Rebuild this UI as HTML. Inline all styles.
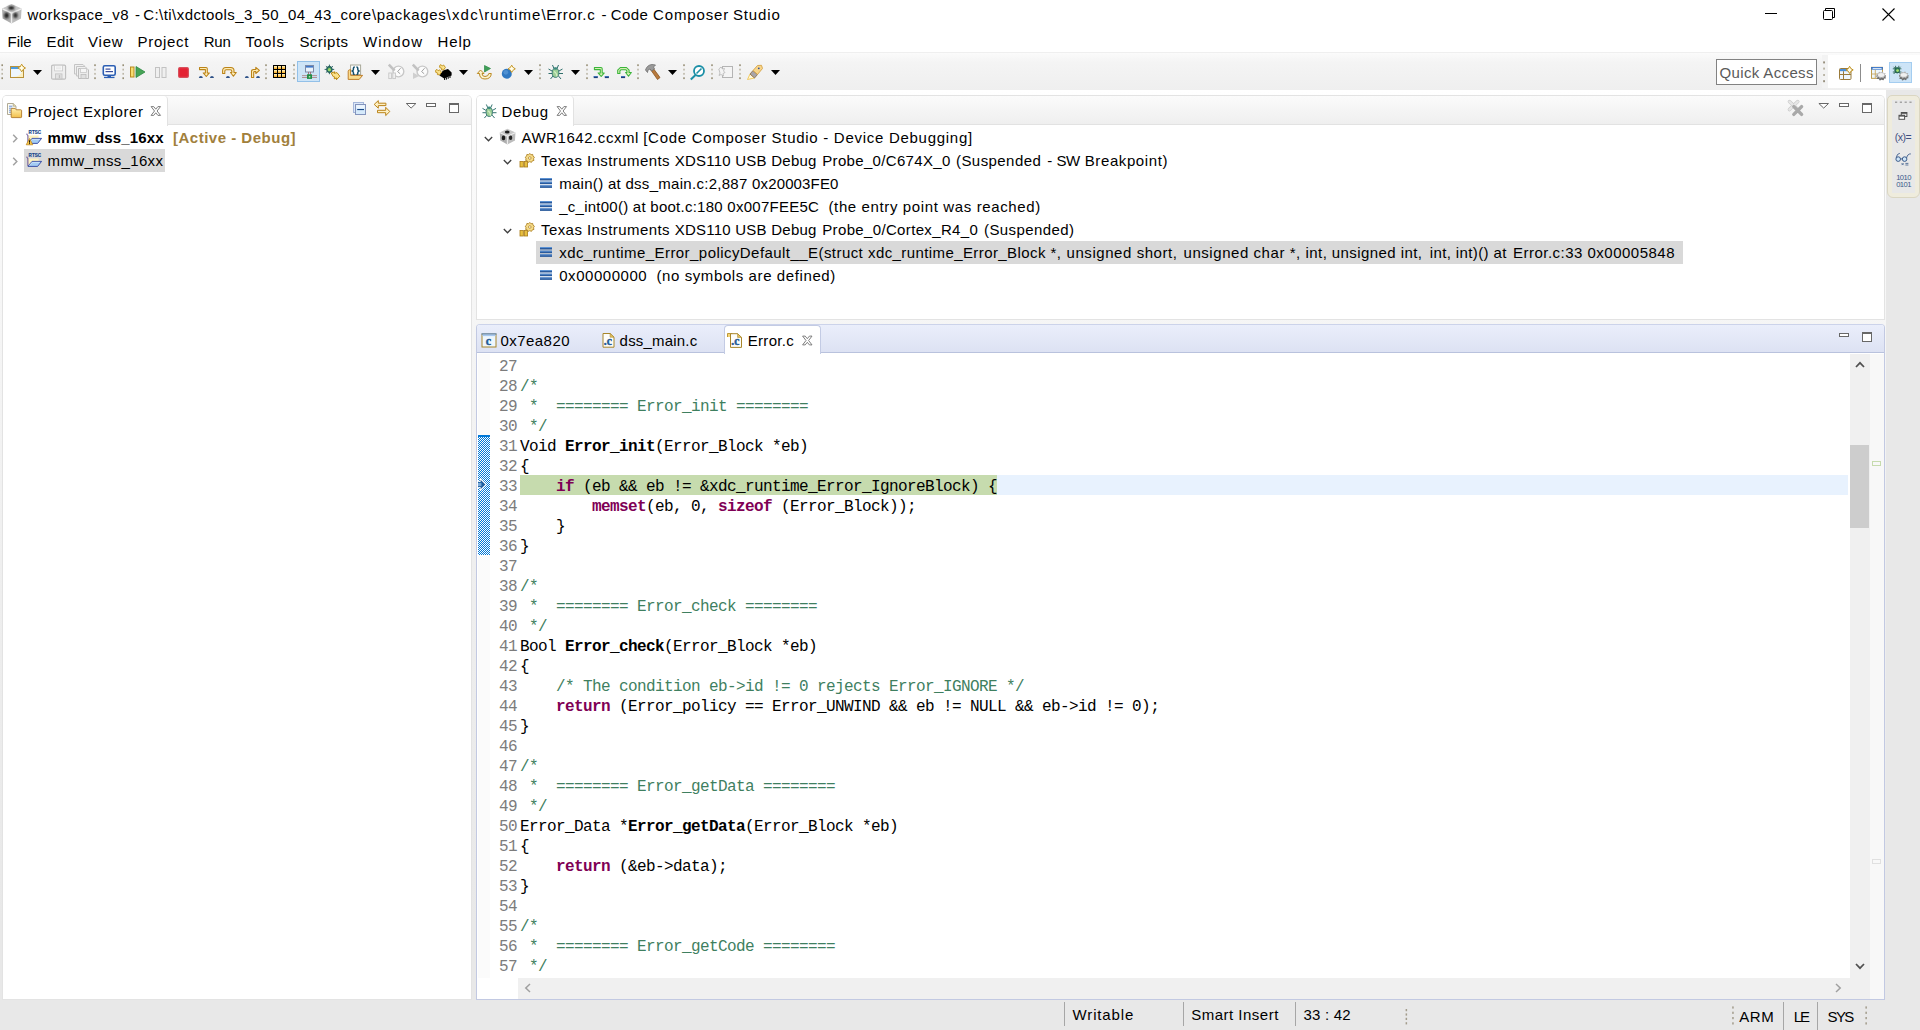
<!DOCTYPE html>
<html><head><meta charset="utf-8"><title>Code Composer Studio</title>
<style>
*{box-sizing:border-box;margin:0;padding:0}
html,body{width:1920px;height:1030px;overflow:hidden;background:#e8e8e8}
body{position:relative;font-family:"Liberation Sans",sans-serif;font-size:15px;color:#000}
.a{position:absolute;white-space:pre}
svg.a{overflow:visible}
.t{position:absolute;white-space:pre;line-height:20px;height:20px}
#titlebar{left:0;top:0;width:1920px;height:53px;background:#fff;border-bottom:1px solid #efefef}
#toolbar{left:0;top:53px;width:1920px;height:37px;background:linear-gradient(#fbfbfb,#f4f4f4 25%,#efefef)}
.panel{position:absolute;background:#fff}
.sh{box-shadow:0 0 0 1px #e3e3e3}
.hdr{position:absolute;left:0;top:0;right:0;height:29px;background:linear-gradient(#fbfbfb,#efefef);border-bottom:1px solid #e2e2e2;border-radius:4px 4px 0 0}
.code{font-family:"Liberation Mono",monospace;font-size:16px;letter-spacing:-0.6px;line-height:20px}
.ln{height:20px;white-space:pre}
.no{color:#7c7c7c;display:inline-block;width:21px}
.c{color:#3f7f5f}.k{color:#7f0055;font-weight:700}.b{font-weight:700}
</style></head><body>
<div class="a" id="titlebar"></div>
<div class="a" id="toolbar"></div>
<div class="a" style="left:0;top:90px;width:1886px;height:910px;background:linear-gradient(#ffffff,#f8f8f8 15%,#eeeeee 56%,#e8e8e8 92%)"></div>
<svg width="0" height="0" style="position:absolute"><defs><filter id="bl" x="-20%" y="-20%" width="140%" height="140%"><feGaussianBlur stdDeviation="0.85"/></filter><filter id="bl2" x="-20%" y="-20%" width="140%" height="140%"><feGaussianBlur stdDeviation="0.45"/></filter></defs></svg>
<svg class="a" style="left:0px;top:0px" width="24" height="26"><g filter="url(#bl2)"><path d="M11.5 4L21.6 8.6 11.5 13.2 2 8.6Z" fill="#c8c8c8"/><path d="M2 8.6L11.5 13.2V23.6L2.6 18.6Z" fill="#aeaeae"/><path d="M11.5 13.2L21.6 8.6 21 18.6 11.5 23.6Z" fill="#bcbcbc"/><path d="M11.5 13.2V23.4M2.4 8.8L11.5 13.2 21.4 8.8" stroke="#eeeeee" stroke-width="1.4" fill="none"/></g><g filter="url(#bl)"><ellipse cx="11.3" cy="7.9" rx="3" ry="1.9" fill="#1c1c1c"/><ellipse cx="6.6" cy="15.4" rx="2.2" ry="2.9" fill="#1c1c1c"/><ellipse cx="15.5" cy="15.3" rx="2.1" ry="2.8" fill="#262626"/></g></svg>
<div class="t" style="left:27.50px;top:5px;letter-spacing:0.466px;">workspace_v8</div>
<div class="t" style="left:135.00px;top:5px;letter-spacing:-0.750px;">-</div>
<div class="t" style="left:143.25px;top:5px;letter-spacing:0.437px;">C:\ti\xdctools_3_50_04_43_core</div>
<div class="t" style="left:372.00px;top:5px;letter-spacing:0.660px;">\packages</div>
<div class="t" style="left:446.50px;top:5px;letter-spacing:1.224px;">\xdc</div>
<div class="t" style="left:479.00px;top:5px;letter-spacing:1.015px;">\runtime</div>
<div class="t" style="left:541.50px;top:5px;letter-spacing:0.688px;">\Error.c</div>
<div class="t" style="left:601.50px;top:5px;letter-spacing:-0.100px;">-</div>
<div class="t" style="left:610.75px;top:5px;letter-spacing:0.397px;">Code</div>
<div class="t" style="left:653.00px;top:5px;letter-spacing:0.873px;">Composer</div>
<div class="t" style="left:733.00px;top:5px;letter-spacing:0.846px;">Studio</div>
<svg class="a" style="left:1765px;top:13px" width="12" height="1"><rect width="12" height="1" fill="#000"/></svg>
<svg class="a" style="left:1823px;top:8px" width="12" height="12"><path d="M2.5 2.5V0.5H11.5V9.5H9.5" fill="none" stroke="#000"/><rect x="0.5" y="2.5" width="9" height="9" rx="1" fill="none" stroke="#000"/></svg>
<svg class="a" style="left:1882px;top:8px" width="13" height="13"><path d="M0.5 0.5L12.5 12.5M12.5 0.5L0.5 12.5" stroke="#000" stroke-width="1.1"/></svg>
<div class="t" style="left:7.60px;top:32px;letter-spacing:-0.021px;">File</div>
<div class="t" style="left:46.50px;top:32px;letter-spacing:0.383px;">Edit</div>
<div class="t" style="left:88.00px;top:32px;letter-spacing:0.786px;">View</div>
<div class="t" style="left:137.60px;top:32px;letter-spacing:0.694px;">Project</div>
<div class="t" style="left:203.80px;top:32px;letter-spacing:-0.293px;">Run</div>
<div class="t" style="left:245.40px;top:32px;letter-spacing:0.926px;">Tools</div>
<div class="t" style="left:299.40px;top:32px;letter-spacing:0.470px;">Scripts</div>
<div class="t" style="left:363.00px;top:32px;letter-spacing:1.135px;">Window</div>
<div class="t" style="left:437.60px;top:32px;letter-spacing:0.812px;">Help</div>
<svg class="a" style="left:1px;top:63px" width="3" height="17"><g transform="translate(0.2,0.7)"><rect x="0.2" y="0.6" width="1.6" height="1.8" fill="#989078"/><rect x="0.2" y="5" width="1.6" height="1.8" fill="#bcb7a8"/><rect x="0.2" y="9.2" width="1.6" height="1.8" fill="#bcb7a8"/><rect x="0.2" y="13.6" width="1.6" height="1.8" fill="#989078"/></g></svg>
<svg class="a" style="left:10px;top:64px" width="16" height="16"><rect x="0.5" y="2.5" width="13" height="11" fill="#eef6fd" stroke="#b8923a"/><rect x="1" y="3" width="12" height="2" fill="#4a9be0"/><path d="M3 13Q10.5 12.5 13 6.5V13Z" fill="#fdf0c0"/><path d="M11.7 0.20000000000000018Q12.6 3.1 15.5 4Q12.6 4.9 11.7 7.8Q10.799999999999999 4.9 7.8999999999999995 4Q10.799999999999999 3.1 11.7 0.20000000000000018Z" fill="#fff3c4" stroke="#c39424" stroke-width="1"/><path d="M11.7 1.7000000000000002V6.3M9.399999999999999 4H14.0" stroke="#fffdf0" stroke-width="1.1"/></svg>
<svg class="a" style="left:33px;top:70px" width="9" height="5"><path d="M0 0H9L4.5 5Z" fill="#000"/></svg>
<svg class="a" style="left:51px;top:64px" width="16" height="16"><g transform="translate(0,0.5)"><path d="M2 0.6H13.4Q14.6 0.6 14.6 1.8V13.4Q14.6 14.6 13.4 14.6H2Q0.6 14.6 0.6 13.4V1.8Q0.6 0.6 2 0.6Z" fill="#eeeeee" stroke="#bebebe" stroke-width="1.1"/><rect x="3.6" y="0.8" width="8" height="5.6" fill="#f8f8f8" stroke="#cacaca" stroke-width="0.8"/><path d="M5 2.6H10M5 4.2H10" stroke="#dcdcdc" stroke-width="0.6"/><rect x="4.4" y="9.4" width="6.6" height="5" fill="#e2e2e2" stroke="#c0c0c0" stroke-width="0.8"/><rect x="7.8" y="10.6" width="1.4" height="3" fill="#c0c0c0"/></g></svg>
<svg class="a" style="left:74px;top:64px" width="16" height="16"><path d="M0.5 0.5H9L10.5 2V10H0.5Z" fill="#f0f0f0" stroke="#c4c4c4"/><path d="M2.5 2.5H11L12.5 4V12H2.5Z" fill="#f0f0f0" stroke="#c4c4c4"/><path d="M4.5 4.5H13L14.5 6V14.5H4.5Z" fill="#ececec" stroke="#bdbdbd"/><rect x="6.5" y="4.5" width="6" height="4" fill="#f6f6f6" stroke="#c8c8c8" stroke-width="0.8"/><rect x="7" y="10.5" width="5" height="4" fill="#e0e0e0" stroke="#bdbdbd" stroke-width="0.8"/></svg>
<svg class="a" style="left:94px;top:63px" width="2" height="17"><g transform="translate(0,0.7)"><rect x="0.2" y="0.6" width="1.6" height="1.8" fill="#989078"/><rect x="0.2" y="5" width="1.6" height="1.8" fill="#bcb7a8"/><rect x="0.2" y="9.2" width="1.6" height="1.8" fill="#bcb7a8"/><rect x="0.2" y="13.6" width="1.6" height="1.8" fill="#989078"/></g></svg>
<svg class="a" style="left:102px;top:65px" width="15" height="14"><g transform="translate(0.5,0)"><rect x="0.8" y="0.8" width="11.9" height="9.4" rx="1.5" fill="#fff" stroke="#2c5fb4" stroke-width="1.6"/><rect x="3" y="3.5" width="5" height="1.2" fill="#3a4c9a"/><rect x="3" y="6" width="7.5" height="1.2" fill="#3a4c9a"/><rect x="5" y="10.5" width="3.5" height="1.5" fill="#2c5fb4"/><rect x="1.5" y="11.8" width="10.5" height="1.3" fill="#2c5fb4"/></g></svg>
<svg class="a" style="left:122px;top:63px" width="3" height="17"><g transform="translate(0.2,0.7)"><rect x="0.2" y="0.6" width="1.6" height="1.8" fill="#989078"/><rect x="0.2" y="5" width="1.6" height="1.8" fill="#bcb7a8"/><rect x="0.2" y="9.2" width="1.6" height="1.8" fill="#bcb7a8"/><rect x="0.2" y="13.6" width="1.6" height="1.8" fill="#989078"/></g></svg>
<svg class="a" style="left:130px;top:64px" width="16" height="17"><g transform="translate(0,0.5)"><rect x="0.5" y="2.5" width="3.5" height="10" fill="#f7dc6f" stroke="#b88a1f"/><path d="M6 2L15 7.5 6 13Z" fill="#46a355" stroke="#2d8a43" stroke-width="0.8"/></g></svg>
<svg class="a" style="left:155px;top:66px" width="12" height="13"><rect x="0.5" y="1.5" width="4" height="10" fill="#efefef" stroke="#c2c2c2"/><rect x="7" y="1.5" width="4" height="10" fill="#efefef" stroke="#c2c2c2"/></svg>
<svg class="a" style="left:178px;top:67px" width="11" height="11"><rect x="0.6" y="0.6" width="9.8" height="9.8" rx="1.4" fill="#e42233" stroke="#d8505c" stroke-width="1.2"/></svg>
<svg class="a" style="left:198px;top:66px" width="17" height="15"><g transform="translate(0.7,0.5)"><path d="M0.8 1H7.4Q8.6 1 8.6 2.2V6.4H10.7L7.6 10 4.5 6.4H6.7V3.1H0.8Z" fill="#fdecb4" stroke="#bb8318" stroke-width="1.05" stroke-linejoin="round"/><path d="M0.1 11.6Q0.4 9.6 2.15 9.6Q3.9 9.6 4.199999999999999 11.6Z" fill="#2f5288"/><path d="M11.2 11.6Q11.5 9.6 13.25 9.6Q15.0 9.6 15.299999999999999 11.6Z" fill="#2f5288"/></g></svg>
<svg class="a" style="left:221px;top:66px" width="17" height="15"><g transform="translate(0.6,0.5)"><path d="M1 7V4.2Q1 1 4.2 1H9.2Q12.4 1 12.4 4.2V6H14.7L11.8 9.8 8.9 6H10.2V4.6Q10.2 3.2 8.8 3.2H4.6Q3.2 3.2 3.2 4.6V7Z" fill="#fdecb4" stroke="#bb8318" stroke-width="1.05" stroke-linejoin="round"/><path d="M4.3 11.6Q4.6 9.6 6.35 9.6Q8.1 9.6 8.399999999999999 11.6Z" fill="#2f5288"/></g></svg>
<svg class="a" style="left:244px;top:66px" width="17" height="15"><g transform="translate(0.4,0.5)"><path d="M7.1 11V5Q7.1 2.9 9.2 2.9H11.4V0.8L15 3.9 11.4 7V5.1H10Q9.3 5.1 9.3 5.8V11Z" fill="#fdecb4" stroke="#bb8318" stroke-width="1.05" stroke-linejoin="round"/><path d="M0.4 11.6Q0.7 9.6 2.4499999999999997 9.6Q4.2 9.6 4.5 11.6Z" fill="#2f5288"/><path d="M11.6 11.6Q11.9 9.6 13.649999999999999 9.6Q15.399999999999999 9.6 15.7 11.6Z" fill="#2f5288"/></g></svg>
<svg class="a" style="left:265px;top:63px" width="2" height="17"><g transform="translate(0,0.7)"><rect x="0.2" y="0.6" width="1.6" height="1.8" fill="#989078"/><rect x="0.2" y="5" width="1.6" height="1.8" fill="#bcb7a8"/><rect x="0.2" y="9.2" width="1.6" height="1.8" fill="#bcb7a8"/><rect x="0.2" y="13.6" width="1.6" height="1.8" fill="#989078"/></g></svg>
<svg class="a" style="left:273px;top:65px" width="13" height="13"><rect x="0" y="0" width="13" height="13" fill="#000"/><rect x="1" y="1" width="3" height="3" fill="#ffe9a8"/><rect x="1" y="2.5" width="3" height="1.5" fill="#fcb839"/><rect x="1" y="5" width="3" height="3" fill="#ffe9a8"/><rect x="1" y="6.5" width="3" height="1.5" fill="#fcb839"/><rect x="1" y="9" width="3" height="3" fill="#ffe9a8"/><rect x="1" y="10.5" width="3" height="1.5" fill="#fcb839"/><rect x="5" y="1" width="3" height="3" fill="#ffe9a8"/><rect x="5" y="2.5" width="3" height="1.5" fill="#fcb839"/><rect x="5" y="5" width="3" height="3" fill="#ffe9a8"/><rect x="5" y="6.5" width="3" height="1.5" fill="#fcb839"/><rect x="5" y="9" width="3" height="3" fill="#ffe9a8"/><rect x="5" y="10.5" width="3" height="1.5" fill="#fcb839"/><rect x="9" y="1" width="3" height="3" fill="#ffe9a8"/><rect x="9" y="2.5" width="3" height="1.5" fill="#fcb839"/><rect x="9" y="5" width="3" height="3" fill="#ffe9a8"/><rect x="9" y="6.5" width="3" height="1.5" fill="#fcb839"/><rect x="9" y="9" width="3" height="3" fill="#ffe9a8"/><rect x="9" y="10.5" width="3" height="1.5" fill="#fcb839"/></svg>
<svg class="a" style="left:293px;top:63px" width="2" height="17"><g transform="translate(0,0.7)"><rect x="0.2" y="0.6" width="1.6" height="1.8" fill="#989078"/><rect x="0.2" y="5" width="1.6" height="1.8" fill="#bcb7a8"/><rect x="0.2" y="9.2" width="1.6" height="1.8" fill="#bcb7a8"/><rect x="0.2" y="13.6" width="1.6" height="1.8" fill="#989078"/></g></svg>
<div class="a" style="left:297px;top:61px;width:23px;height:21px;background:#cde4f7;border:1px solid #92c0e8"></div>
<svg class="a" style="left:302px;top:65px" width="15" height="15"><rect x="3.5" y="0.5" width="8" height="6.5" fill="#eaf3fb" stroke="#7c8aa8"/><rect x="4" y="1" width="7" height="1.6" fill="#3f78c8"/><path d="M6.5 7V10M8.5 7V10" stroke="#a06060" stroke-width="0.8"/><rect x="0" y="10.2" width="15" height="0.9" fill="#b08888"/><rect x="0" y="12" width="15" height="0.9" fill="#b08888"/><rect x="5" y="9.3" width="5" height="4.6" fill="#1e8c46"/><rect x="6.8" y="11" width="1.5" height="1.5" fill="#b6e3a0"/></svg>
<svg class="a" style="left:324px;top:64px" width="17" height="17"><g transform="translate(0.4,0.4)"><g stroke="#2f6668" stroke-width="1"><path d="M1.5 1.8L8.5 8.2M8.5 1.8L1.5 8.2M0.2 5H9.8M5 0.2V9.8"/></g><ellipse cx="5" cy="5" rx="2.8" ry="3.1" fill="#2f7a62" stroke="#24585a" stroke-width="0.9"/><circle cx="5" cy="5.3" r="1.6" fill="#9bd86a"/><path d="M6.8 8.6L10.4 7.4 9.8 9 12.6 8.2 15.4 11.8 12 15.4 12.4 13.6 9.8 14.4 10.4 12.6 8.8 12.2Z" fill="#fbe28c" stroke="#b8860b" stroke-width="0.95" stroke-linejoin="round"/></g></svg>
<svg class="a" style="left:347px;top:64px" width="17" height="16"><g transform="translate(0.6,0)"><rect x="3" y="1" width="10" height="9.6" fill="#fff" stroke="#a8a898"/><path d="M7.2 3Q5.8 3 5.8 4.2V5.4Q5.8 6.7 4 6.9Q5.8 7.1 5.8 8.4V9.6Q5.8 10.8 7.2 10.8M8.8 3Q10.2 3 10.2 4.2V5.4Q10.2 6.7 12 6.9Q10.2 7.1 10.2 8.4V9.6Q10.2 10.8 8.8 10.8" fill="none" stroke="#15506e" stroke-width="1.5"/><path d="M0.6 15.4V7.2Q0.6 6 2 5.8L3 5.6V11.4H15L11.6 15.4Z" fill="#fbdc8e" stroke="#bc7a26" stroke-width="0.95" stroke-linejoin="round"/></g></svg>
<svg class="a" style="left:371px;top:70px" width="9" height="5"><path d="M0 0H9L4.5 5Z" fill="#000"/></svg>
<svg class="a" style="left:388px;top:64px" width="16" height="16"><circle cx="10.4" cy="7.5" r="5.4" fill="#fcfcfc" stroke="#c8c8c8" stroke-width="1.4"/><path d="M12.6 4.2L9.6 7.6 12.2 9.8" fill="none" stroke="#9a9a9a" stroke-width="0.9"/><path d="M0.8 0.6L6.6 6.6" stroke="#c2c2c2" stroke-width="2.6"/><rect x="0.8" y="9" width="2.6" height="5.6" fill="#f2f2f2" stroke="#c6c6c6" stroke-width="0.9"/><rect x="4.8" y="9" width="2.6" height="5.6" fill="#f2f2f2" stroke="#c6c6c6" stroke-width="0.9"/></svg>
<svg class="a" style="left:412px;top:64px" width="16" height="16"><circle cx="10.4" cy="7.5" r="5.4" fill="#fcfcfc" stroke="#c8c8c8" stroke-width="1.4"/><path d="M12.6 4.2L9.6 7.6 12.2 9.8" fill="none" stroke="#9a9a9a" stroke-width="0.9"/><path d="M0.8 0.6L6.6 6.6" stroke="#c2c2c2" stroke-width="2.6"/><path d="M1 8.6L7.2 12 1 15Z" fill="#cfcfcf"/></svg>
<svg class="a" style="left:435px;top:64px" width="16" height="16"><path d="M4.4 11.6L8 6.4 13 5 16.6 8.4V11.6L9.2 14.4Z" fill="#000"/><path d="M9.6 14V16M11.4 13.4V15.6M13.2 12.8V14.8M15 12V14" stroke="#000" stroke-width="1"/><g transform="translate(0,5)"><path d="M0.6 1.4L2 0.4 3.2 1.8 4.6 0.8 6.4 3.2 4.6 5.8 2.4 5.6 2.8 4.2 0.8 3.4Z" fill="#fbe28c" stroke="#c0901c" stroke-width="0.95" stroke-linejoin="round"/></g><g transform="translate(4,0.2)"><path d="M0.6 1.4L2 0.4 3.2 1.8 4.6 0.8 6.4 3.2 4.6 5.8 2.4 5.6 2.8 4.2 0.8 3.4Z" fill="#fbe28c" stroke="#c0901c" stroke-width="0.95" stroke-linejoin="round"/></g></svg>
<svg class="a" style="left:459px;top:70px" width="9" height="5"><path d="M0 0H9L4.5 5Z" fill="#000"/></svg>
<svg class="a" style="left:476px;top:64px" width="17" height="17"><g transform="translate(0.5,0.5)"><path d="M8 1L14 4 8 7.5Z" fill="#3f9e58" stroke="#2d8a43" stroke-width="0.7"/><path d="M4 5.5L0.8 9 3 9Q3 14.5 8.5 14.5Q14.5 14.5 14.8 9H12.3Q12 12 8.5 12Q5.5 12 5.5 9H7.5Z" fill="#fdf3cc" stroke="#bb8a23" stroke-width="1" stroke-linejoin="round"/></g></svg>
<svg class="a" style="left:501px;top:64px" width="16" height="16"><g transform="translate(0.5,0.5)"><circle cx="5.3" cy="9.3" r="5" fill="#2f78c2"/><circle cx="4.3" cy="7.8" r="2.4" fill="#5b9ad8" opacity="0.7"/><path d="M10.2 0.6999999999999997Q11.1 3.4 13.799999999999999 4.3Q11.1 5.2 10.2 7.9Q9.299999999999999 5.2 6.6 4.3Q9.299999999999999 3.4 10.2 0.6999999999999997Z" fill="#fff3c4" stroke="#c39424" stroke-width="1"/><path d="M10.2 2.1999999999999997V6.4M8.1 4.3H12.299999999999999" stroke="#fffdf0" stroke-width="1.1"/></g></svg>
<svg class="a" style="left:524px;top:70px" width="9" height="5"><path d="M0 0H9L4.5 5Z" fill="#000"/></svg>
<svg class="a" style="left:539px;top:63px" width="2" height="17"><g transform="translate(0,0.7)"><rect x="0.2" y="0.6" width="1.6" height="1.8" fill="#989078"/><rect x="0.2" y="5" width="1.6" height="1.8" fill="#bcb7a8"/><rect x="0.2" y="9.2" width="1.6" height="1.8" fill="#bcb7a8"/><rect x="0.2" y="13.6" width="1.6" height="1.8" fill="#989078"/></g></svg>
<svg class="a" style="left:548px;top:64px" width="16" height="17"><g transform="translate(0,0.5)"><g stroke="#2f6f6c" stroke-width="1" fill="none"><path d="M4.5 0.5L6 4M10.5 0.5L9 4M0.5 4.5L4 6.5M14.5 4.5L11 6.5M0.5 9H4M15 9H11M2.5 14.5L5 11.5M13 14.5L10.5 11.5"/></g><ellipse cx="7.5" cy="8.3" rx="3.3" ry="4.6" fill="#9ccf96" stroke="#2f6f6c" stroke-width="0.9"/><ellipse cx="7.5" cy="4" rx="1.8" ry="1.3" fill="#3f8a80"/><path d="M6 7Q8.5 8 9 12" stroke="#d6eec6" stroke-width="1.2" fill="none"/></g></svg>
<svg class="a" style="left:571px;top:70px" width="9" height="5"><path d="M0 0H9L4.5 5Z" fill="#000"/></svg>
<svg class="a" style="left:586px;top:63px" width="2" height="17"><g transform="translate(0,0.7)"><rect x="0.2" y="0.6" width="1.6" height="1.8" fill="#989078"/><rect x="0.2" y="5" width="1.6" height="1.8" fill="#bcb7a8"/><rect x="0.2" y="9.2" width="1.6" height="1.8" fill="#bcb7a8"/><rect x="0.2" y="13.6" width="1.6" height="1.8" fill="#989078"/></g></svg>
<svg class="a" style="left:593px;top:66px" width="17" height="15"><g transform="translate(0.6,0.5)"><path d="M0.8 1H7.4Q8.6 1 8.6 2.2V6.4H10.7L7.6 10 4.5 6.4H6.7V3.1H0.8Z" fill="#d6efb4" stroke="#3ab53a" stroke-width="1.05" stroke-linejoin="round"/><rect x="0.1" y="9.7" width="4.1" height="1.9" fill="#1f3f78"/><rect x="0.1" y="9.7" width="4.1" height="0.7" fill="#3a78c8"/><rect x="11.2" y="9.7" width="4.1" height="1.9" fill="#1f3f78"/><rect x="11.2" y="9.7" width="4.1" height="0.7" fill="#3a78c8"/></g></svg>
<svg class="a" style="left:616px;top:66px" width="17" height="15"><g transform="translate(0.7,0.5)"><path d="M1 7V3.6L3.6 1H9.8L12.4 3.6V6H14.7L11.8 9.8 8.9 6H10.2V4.4L9 3.2H4.4L3.2 4.4V7Z" fill="#d6efb4" stroke="#3ab53a" stroke-width="1.05" stroke-linejoin="round"/><rect x="4.3" y="9.7" width="4.1" height="1.9" fill="#1f3f78"/><rect x="4.3" y="9.7" width="4.1" height="0.7" fill="#3a78c8"/></g></svg>
<svg class="a" style="left:637px;top:63px" width="2" height="17"><g transform="translate(0,0.7)"><rect x="0.2" y="0.6" width="1.6" height="1.8" fill="#989078"/><rect x="0.2" y="5" width="1.6" height="1.8" fill="#bcb7a8"/><rect x="0.2" y="9.2" width="1.6" height="1.8" fill="#bcb7a8"/><rect x="0.2" y="13.6" width="1.6" height="1.8" fill="#989078"/></g></svg>
<svg class="a" style="left:645px;top:64px" width="16" height="16"><path d="M5.5 5.5L8 4 15 13.5 12.5 15.5Z" fill="#b87a3d" stroke="#8a5320" stroke-width="0.8"/><path d="M0.5 6Q2 1 7 0.5L10.5 1 8.5 3 9.5 5 6.5 7 5 5 3 6 2.5 8.5Z" fill="#9a9a9a" stroke="#6e6e6e" stroke-width="0.8" stroke-linejoin="round"/></svg>
<svg class="a" style="left:668px;top:70px" width="9" height="5"><path d="M0 0H9L4.5 5Z" fill="#000"/></svg>
<svg class="a" style="left:683px;top:63px" width="2" height="17"><g transform="translate(0,0.7)"><rect x="0.2" y="0.6" width="1.6" height="1.8" fill="#989078"/><rect x="0.2" y="5" width="1.6" height="1.8" fill="#bcb7a8"/><rect x="0.2" y="9.2" width="1.6" height="1.8" fill="#bcb7a8"/><rect x="0.2" y="13.6" width="1.6" height="1.8" fill="#989078"/></g></svg>
<svg class="a" style="left:690px;top:65px" width="15" height="15"><circle cx="9" cy="6" r="5" fill="#fff" stroke="#1b8fa6" stroke-width="1.8"/><path d="M5.5 10L0.8 14.5" stroke="#1b8fa6" stroke-width="2"/><path d="M6.5 8.5L11.5 3.5" stroke="#1b8fa6" stroke-width="1.6"/></svg>
<svg class="a" style="left:711px;top:63px" width="2" height="17"><g transform="translate(0,0.7)"><rect x="0.2" y="0.6" width="1.6" height="1.8" fill="#989078"/><rect x="0.2" y="5" width="1.6" height="1.8" fill="#bcb7a8"/><rect x="0.2" y="9.2" width="1.6" height="1.8" fill="#bcb7a8"/><rect x="0.2" y="13.6" width="1.6" height="1.8" fill="#989078"/></g></svg>
<svg class="a" style="left:718px;top:66px" width="16" height="13"><rect x="4.5" y="0.5" width="10" height="11" fill="#f4f4f4" stroke="#b4b4b4"/><path d="M0.8 3L3 1 4.5 3 6.5 2.5 5.5 5 7 6.5 5 7.5 5.5 10 3 8.5 1 9.5 2 7Z" fill="#f4f4f4" stroke="#b4b4b4" stroke-width="0.8"/></svg>
<svg class="a" style="left:739px;top:63px" width="2" height="17"><g transform="translate(0,0.7)"><rect x="0.2" y="0.6" width="1.6" height="1.8" fill="#989078"/><rect x="0.2" y="5" width="1.6" height="1.8" fill="#bcb7a8"/><rect x="0.2" y="9.2" width="1.6" height="1.8" fill="#bcb7a8"/><rect x="0.2" y="13.6" width="1.6" height="1.8" fill="#989078"/></g></svg>
<svg class="a" style="left:746px;top:64px" width="17" height="17"><g transform="translate(0.5,0.5)"><path d="M1 15L3.5 9.5 8 13.5Z" fill="#fff8dc" stroke="#f0c040" stroke-width="0.8"/><path d="M3.5 9.5L6.5 6 11 10 8 13.5Z" fill="#a8a4a8" stroke="#8a6a40" stroke-width="0.8"/><path d="M6.5 6L11 1 15 0.8 16 4 11 10Z" fill="#f8d58a" stroke="#d09a3a" stroke-width="0.8"/><circle cx="12.3" cy="3.8" r="0.9" fill="#2d4f9a"/></g></svg>
<svg class="a" style="left:771px;top:70px" width="9" height="5"><path d="M0 0H9L4.5 5Z" fill="#000"/></svg>
<div class="a" style="left:1716px;top:59px;width:101px;height:26px;background:#fff;border:1px solid #828282"></div>
<div class="t" style="left:1719.60px;top:63px;color:#5a5a5a;letter-spacing:0.345px;">Quick Access</div>
<div class="a" style="left:1822px;top:55px;width:98px;height:33px;background:#fff"></div>
<div class="a" style="left:1822px;top:55px;width:6px;height:33px;background:#f3f3f3"></div>
<svg class="a" style="left:1823px;top:61px" width="3" height="25"><g transform="translate(0.2,0.4)"><rect y="0" width="1.7" height="2" fill="#8e8672"/><rect y="6.2" width="1.7" height="2" fill="#b4ae9e"/><rect y="12.6" width="1.7" height="2" fill="#b4ae9e"/><rect y="18.8" width="1.7" height="2" fill="#8e8672"/></g></svg>
<svg class="a" style="left:1839px;top:66px" width="16" height="15"><rect x="0.5" y="2.5" width="11.5" height="11" rx="1" fill="#eef7fd" stroke="#9a7a3a"/><rect x="1" y="3" width="10.5" height="2.2" fill="#4a8fd8"/><path d="M0.8 8.5H12M4.5 5.2V13.2" stroke="#9a7a3a" stroke-width="1"/><path d="M10.6 0.3Q11.4 3 14.2 3.9Q11.4 4.8 10.6 7.5Q9.8 4.8 7 3.9Q9.8 3 10.6 0.3Z" fill="#fffbe8" stroke="#c0901c" stroke-width="1"/></svg>
<div class="a" style="left:1860px;top:64px;width:1px;height:18px;background:#8c8c8c"></div>
<svg class="a" style="left:1870px;top:65px" width="17" height="18"><g transform="translate(0,0.5)"><rect x="1.5" y="1.8" width="11" height="11" fill="#eef7fd" stroke="#b8923a" stroke-width="0.9"/><rect x="1.2" y="1.5" width="11.6" height="2.6" fill="#2f6fc8"/><rect x="2.6" y="2.4" width="9" height="0.9" fill="#fff"/><path d="M1.5 8.5H12.5M5.3 4.2V12.6" stroke="#c8a860" stroke-width="0.9"/><path d="M16.00 12.30L15.72 12.96L14.27 13.09L13.81 13.49L13.91 14.54L13.06 14.86L11.91 14.21L11.19 14.26L10.23 15.06L9.31 14.85L9.13 13.81L8.57 13.48L7.12 13.55L6.67 12.94L7.57 12.11L7.50 11.59L6.40 10.90L6.68 10.24L8.13 10.11L8.59 9.71L8.49 8.66L9.34 8.34L10.49 8.99L11.21 8.94L12.17 8.14L13.09 8.35L13.27 9.39L13.83 9.72L15.28 9.65L15.73 10.26L14.83 11.09L14.90 11.61Z" fill="#6e6e6e"/><rect x="6.6" y="9.6" width="9.2" height="2.2" fill="#7c7c7c"/><path d="M16.00 10.30L15.72 10.96L14.27 11.09L13.81 11.49L13.91 12.54L13.06 12.86L11.91 12.21L11.19 12.26L10.23 13.06L9.31 12.85L9.13 11.81L8.57 11.48L7.12 11.55L6.67 10.94L7.57 10.11L7.50 9.59L6.40 8.90L6.68 8.24L8.13 8.11L8.59 7.71L8.49 6.66L9.34 6.34L10.49 6.99L11.21 6.94L12.17 6.14L13.09 6.35L13.27 7.39L13.83 7.72L15.28 7.65L15.73 8.26L14.83 9.09L14.90 9.61Z" fill="#b4b4b4"/><ellipse cx="11.2" cy="9.5" rx="3.2" ry="1.9" fill="#f0f0f0"/></g></svg>
<div class="a" style="left:1889px;top:62px;width:23px;height:21px;background:#cde4f7;border:1px solid #a4cdf0"></div>
<svg class="a" style="left:1892px;top:65px" width="18" height="17"><g stroke="#1f5a48" stroke-width="0.85"><path d="M1.6 1.8L8.6 9M8.6 1.8L1.6 9M0.8 3.8H9.4M0.8 7H9.4M3.6 0.8V3M6.8 0.8V3"/></g><ellipse cx="5.2" cy="5.3" rx="2.4" ry="2.7" fill="#2f7a5a" stroke="#1f5a48" stroke-width="0.8"/><circle cx="5.6" cy="5.6" r="1.4" fill="#a8e070"/><g transform="translate(0.6,0.4)"><path d="M16.00 12.30L15.72 12.96L14.27 13.09L13.81 13.49L13.91 14.54L13.06 14.86L11.91 14.21L11.19 14.26L10.23 15.06L9.31 14.85L9.13 13.81L8.57 13.48L7.12 13.55L6.67 12.94L7.57 12.11L7.50 11.59L6.40 10.90L6.68 10.24L8.13 10.11L8.59 9.71L8.49 8.66L9.34 8.34L10.49 8.99L11.21 8.94L12.17 8.14L13.09 8.35L13.27 9.39L13.83 9.72L15.28 9.65L15.73 10.26L14.83 11.09L14.90 11.61Z" fill="#6e6e6e"/><rect x="6.6" y="9.6" width="9.2" height="2.2" fill="#7c7c7c"/><path d="M16.00 10.30L15.72 10.96L14.27 11.09L13.81 11.49L13.91 12.54L13.06 12.86L11.91 12.21L11.19 12.26L10.23 13.06L9.31 12.85L9.13 11.81L8.57 11.48L7.12 11.55L6.67 10.94L7.57 10.11L7.50 9.59L6.40 8.90L6.68 8.24L8.13 8.11L8.59 7.71L8.49 6.66L9.34 6.34L10.49 6.99L11.21 6.94L12.17 6.14L13.09 6.35L13.27 7.39L13.83 7.72L15.28 7.65L15.73 8.26L14.83 9.09L14.90 9.61Z" fill="#b4b4b4"/><ellipse cx="11.2" cy="9.5" rx="3.2" ry="1.9" fill="#f0f0f0"/></g></svg>
<div class="panel sh" style="left:3px;top:96px;width:468px;height:903px;border-radius:4px 4px 0 0"><div class="hdr"></div><div class="a" style="left:0;top:0;width:165px;height:30px;background:#fff;border-radius:4px 4px 0 0;border-right:1px solid #e2e2e2"></div></div>
<svg class="a" style="left:7px;top:103px" width="16" height="15"><defs><linearGradient id="fg" x1="0" y1="0" x2="0" y2="1"><stop offset="0" stop-color="#fff0b0"/><stop offset="1" stop-color="#f2bf4a"/></linearGradient></defs><path d="M0.5 0.5H6.2L9 3.2V11.5H0.5Z" fill="#fdfdf4" stroke="#a8a08a" stroke-width="0.9"/><path d="M6.2 0.5V3.2H9" fill="#e8dca8" stroke="#a8a08a" stroke-width="0.7"/><path d="M2 3.2H5.4M2 5.2H5.4M2 7.2H4.4M2 9.2H4" stroke="#5a84d4" stroke-width="0.9"/><path d="M4.2 14V6.2Q4.2 5.4 5 5.4H8.2L9.2 6.8H13.8Q14.6 6.8 14.6 7.6V14Q14.6 14.6 13.8 14.6H5Q4.2 14.6 4.2 14Z" fill="url(#fg)" stroke="#b07a2a" stroke-width="0.9" stroke-linejoin="round"/></svg>
<div class="t" style="left:27.40px;top:102px;letter-spacing:0.592px;">Project Explorer</div>
<svg class="a" style="left:150px;top:106px" width="12" height="11"><g transform="translate(0.5,0)"><path d="M0.6 0.6H3.2L5.3 3.2 7.4 0.6H10L6.6 5 10 9.4H7.4L5.3 6.8 3.2 9.4H0.6L4 5Z" fill="#fff" stroke="#707070" stroke-width="0.9" stroke-linejoin="round"/></g></svg>
<svg class="a" style="left:353px;top:102px" width="14" height="14"><rect x="0.5" y="0.5" width="10" height="10" fill="#dde8f8" stroke="#a4b6da"/><rect x="2.5" y="2.5" width="10" height="10" fill="#d6eafb" stroke="#8494bc"/><rect x="3.2" y="3.2" width="8.6" height="3" fill="#eef6fd"/><rect x="4.2" y="7" width="6.8" height="1.1" fill="#1a4a8a"/></svg>
<svg class="a" style="left:373px;top:100px" width="18" height="16"><g transform="translate(0.5,0)"><path d="M0.7 4.4L4.8 0.6V3.2H12.4V5.6H4.8V8.2Z" fill="#fdf0c4" stroke="#bb8318" stroke-width="1" stroke-linejoin="round"/><path d="M16.3 11.5L12.2 7.3V10.3H4V12.7H12.2V15.6Z" fill="#fdf0c4" stroke="#bb8318" stroke-width="1" stroke-linejoin="round"/></g></svg>
<svg class="a" style="left:405px;top:102px" width="12" height="7"><g transform="translate(0.6,0.9)"><path d="M0.7 0.6H10.3L5.5 5.2Z" fill="#fff" stroke="#686868" stroke-width="1"/></g></svg>
<svg class="a" style="left:426px;top:103px" width="10" height="4"><rect x="0.5" y="0.5" width="9" height="3" fill="#fff" stroke="#686868"/></svg>
<svg class="a" style="left:449px;top:103px" width="10" height="11"><rect x="0.5" y="0.5" width="9" height="9" fill="#fff" stroke="#686868"/><rect x="0.5" y="0.5" width="9" height="1.5" fill="#686868"/></svg>
<div class="a" style="left:24px;top:149px;width:141px;height:23px;background:#d9d9d9"></div>
<svg class="a" style="left:12px;top:134px" width="7" height="9"><g transform="translate(0.3,0)"><path d="M0.9 0.8L4.5 4.5 0.9 8.2" fill="none" stroke="#a2a2a2" stroke-width="1.5"/></g></svg>
<svg class="a" style="left:12px;top:157px" width="7" height="9"><g transform="translate(0.3,0)"><path d="M0.9 0.8L4.5 4.5 0.9 8.2" fill="none" stroke="#a2a2a2" stroke-width="1.5"/></g></svg>
<svg class="a" style="left:26px;top:129px" width="16" height="16"><text x="2.6" y="5.4" font-family="Liberation Sans,sans-serif" font-size="6" font-weight="700" fill="#15458a" stroke="#15458a" stroke-width="0.2" textLength="12.4" lengthAdjust="spacingAndGlyphs">RTSC</text><path d="M2 6.4H12.6V9.6H6.2L2.4 14Z" fill="#fdf2c0"/><path d="M0.9 4.6V5.8L1.9 6.2V14" fill="none" stroke="#5a3f8a" stroke-width="0.9"/><path d="M2 14.4L6 9.4H15.6L11.6 14.4Z" fill="#a4ccf4" stroke="#2f44a0" stroke-width="0.9" stroke-linejoin="round"/><path d="M3.2 13.4L6.4 10.4H13.6" fill="none" stroke="#d0e6fb" stroke-width="0.8"/><path d="M3.5 9.5L6.8 15.8H0.2Z" fill="#f8c84a" stroke="#b8801a" stroke-width="0.7"/><rect x="3.1" y="11.3" width="0.9" height="2.4" fill="#000"/><rect x="3.1" y="14.2" width="0.9" height="0.9" fill="#000"/></svg>
<svg class="a" style="left:26px;top:152px" width="16" height="16"><text x="2.6" y="5.4" font-family="Liberation Sans,sans-serif" font-size="6" font-weight="700" fill="#15458a" stroke="#15458a" stroke-width="0.2" textLength="12.4" lengthAdjust="spacingAndGlyphs">RTSC</text><path d="M2 6.4H12.6V9.6H6.2L2.4 14Z" fill="#fdf2c0"/><path d="M0.9 4.6V5.8L1.9 6.2V14" fill="none" stroke="#5a3f8a" stroke-width="0.9"/><path d="M2 14.4L6 9.4H15.6L11.6 14.4Z" fill="#a4ccf4" stroke="#2f44a0" stroke-width="0.9" stroke-linejoin="round"/><path d="M3.2 13.4L6.4 10.4H13.6" fill="none" stroke="#d0e6fb" stroke-width="0.8"/></svg>
<div class="t" style="left:47.60px;top:128px;font-weight:700;letter-spacing:0.170px;">mmw_dss_16xx</div>
<div class="t" style="left:173.00px;top:128px;font-weight:700;color:#a1803c;letter-spacing:0.502px;">[Active - Debug]</div>
<div class="t" style="left:47.60px;top:151px;letter-spacing:0.332px;">mmw_mss_16xx</div>
<div class="panel sh" style="left:477px;top:96px;width:1407px;height:223px;border-radius:4px 4px 0 0"><div class="hdr"></div><div class="a" style="left:0;top:0;width:97px;height:30px;background:#fff;border-radius:4px 4px 0 0;border-right:1px solid #e2e2e2"></div></div>
<svg class="a" style="left:482px;top:104px" width="15" height="15" viewBox="0 0 15.5 15.5"><g transform="translate(0,0)"><g stroke="#2f6f6c" stroke-width="1" fill="none"><path d="M4.5 0.5L6 4M10.5 0.5L9 4M0.5 4.5L4 6.5M14.5 4.5L11 6.5M0.5 9H4M15 9H11M2.5 14.5L5 11.5M13 14.5L10.5 11.5"/></g><ellipse cx="7.5" cy="8.3" rx="3.3" ry="4.6" fill="#9ccf96" stroke="#2f6f6c" stroke-width="0.9"/><ellipse cx="7.5" cy="4" rx="1.8" ry="1.3" fill="#3f8a80"/><path d="M6 7Q8.5 8 9 12" stroke="#d6eec6" stroke-width="1.2" fill="none"/></g></svg>
<div class="t" style="left:501.60px;top:102px;letter-spacing:0.577px;">Debug</div>
<svg class="a" style="left:556px;top:106px" width="12" height="11"><g transform="translate(0.5,0)"><path d="M0.6 0.6H3.2L5.3 3.2 7.4 0.6H10L6.6 5 10 9.4H7.4L5.3 6.8 3.2 9.4H0.6L4 5Z" fill="#fff" stroke="#707070" stroke-width="0.9" stroke-linejoin="round"/></g></svg>
<svg class="a" style="left:1787px;top:100px" width="17" height="17"><path d="M2.4 1.6L10.8 9.6M10.8 1.6L2.4 9.6" stroke="#c8c8c8" stroke-width="3.4" stroke-linecap="round"/><path d="M2.4 1.6L10.8 9.6M10.8 1.6L2.4 9.6" stroke="#e6e6e6" stroke-width="2.2" stroke-linecap="round"/><path d="M6.8 6.6L14.6 14.4M14.6 6.6L6.8 14.4" stroke="#a9a9a9" stroke-width="3.4" stroke-linecap="round"/></svg>
<svg class="a" style="left:1818px;top:102px" width="12" height="7"><g transform="translate(0.2,0.9)"><path d="M0.7 0.6H10.3L5.5 5.2Z" fill="#fff" stroke="#686868" stroke-width="1"/></g></svg>
<svg class="a" style="left:1839px;top:103px" width="10" height="4"><rect x="0.5" y="0.5" width="9" height="3" fill="#fff" stroke="#686868"/></svg>
<svg class="a" style="left:1862px;top:103px" width="10" height="11"><rect x="0.5" y="0.5" width="9" height="9" fill="#fff" stroke="#686868"/><rect x="0.5" y="0.5" width="9" height="1.5" fill="#686868"/></svg>
<div class="a" style="left:536px;top:241px;width:1147px;height:23px;background:#d9d9d9"></div>
<svg class="a" style="left:484px;top:136px" width="9" height="6"><path d="M0.8 1L4.5 4.8 8.2 1" fill="none" stroke="#404040" stroke-width="1.3"/></svg>
<svg class="a" style="left:499px;top:128px" width="18" height="18" viewBox="1 3 22.5 22.5"><g transform="translate(0,0)"><g filter="url(#bl2)"><path d="M11.5 4L21.6 8.6 11.5 13.2 2 8.6Z" fill="#c8c8c8"/><path d="M2 8.6L11.5 13.2V23.6L2.6 18.6Z" fill="#aeaeae"/><path d="M11.5 13.2L21.6 8.6 21 18.6 11.5 23.6Z" fill="#bcbcbc"/><path d="M11.5 13.2V23.4M2.4 8.8L11.5 13.2 21.4 8.8" stroke="#eeeeee" stroke-width="1.4" fill="none"/></g><g filter="url(#bl)"><ellipse cx="11.3" cy="7.9" rx="3" ry="1.9" fill="#1c1c1c"/><ellipse cx="6.6" cy="15.4" rx="2.2" ry="2.9" fill="#1c1c1c"/><ellipse cx="15.5" cy="15.3" rx="2.1" ry="2.8" fill="#262626"/></g></g></svg>
<div class="t" style="left:521.40px;top:128px;letter-spacing:0.559px;">AWR1642.ccxml</div>
<div class="t" style="left:643.20px;top:128px;letter-spacing:0.719px;">[Code Composer Studio - Device Debugging]</div>
<svg class="a" style="left:503px;top:159px" width="9" height="6"><path d="M0.8 1L4.5 4.8 8.2 1" fill="none" stroke="#404040" stroke-width="1.3"/></svg>
<svg class="a" style="left:519px;top:153px" width="16" height="15"><g transform="translate(0.5,0)"><rect x="0.5" y="8.5" width="3.3" height="5.5" fill="#e8c040" stroke="#a87a18" stroke-width="0.8"/><rect x="4.8" y="8.5" width="3.3" height="5.5" fill="#e8c040" stroke="#a87a18" stroke-width="0.8"/><g transform="translate(10.3,5)"><path d="M0 -4.6L1.2 -3.2 2.9 -3.6 3.2 -1.8 4.6 -0.8 3.7 0.8 4.2 2.4 2.5 2.9 1.6 4.4 0 3.6 -1.6 4.4 -2.5 2.9 -4.2 2.4 -3.7 0.8 -4.6 -0.8 -3.2 -1.8 -2.9 -3.6 -1.2 -3.2Z" fill="#f6dc8a" stroke="#a87a18" stroke-width="0.8"/><circle r="1.3" fill="#fff" stroke="#a87a18" stroke-width="0.7"/></g></g></svg>
<div class="t" style="left:541.00px;top:151px;letter-spacing:0.426px;">Texas Instruments</div>
<div class="t" style="left:674.75px;top:151px;letter-spacing:0.233px;">XDS110 USB Debug</div>
<div class="t" style="left:822.25px;top:151px;letter-spacing:0.332px;">Probe_0/C674X_0</div>
<div class="t" style="left:956.00px;top:151px;letter-spacing:0.431px;">(Suspended</div>
<div class="t" style="left:1047.25px;top:151px;letter-spacing:-0.750px;">-</div>
<div class="t" style="left:1056.50px;top:151px;letter-spacing:-0.615px;">SW</div>
<div class="t" style="left:1084.75px;top:151px;letter-spacing:0.598px;">Breakpoint)</div>
<svg class="a" style="left:503px;top:228px" width="9" height="6"><path d="M0.8 1L4.5 4.8 8.2 1" fill="none" stroke="#404040" stroke-width="1.3"/></svg>
<svg class="a" style="left:519px;top:222px" width="16" height="15"><g transform="translate(0.5,0)"><rect x="0.5" y="8.5" width="3.3" height="5.5" fill="#e8c040" stroke="#a87a18" stroke-width="0.8"/><rect x="4.8" y="8.5" width="3.3" height="5.5" fill="#e8c040" stroke="#a87a18" stroke-width="0.8"/><g transform="translate(10.3,5)"><path d="M0 -4.6L1.2 -3.2 2.9 -3.6 3.2 -1.8 4.6 -0.8 3.7 0.8 4.2 2.4 2.5 2.9 1.6 4.4 0 3.6 -1.6 4.4 -2.5 2.9 -4.2 2.4 -3.7 0.8 -4.6 -0.8 -3.2 -1.8 -2.9 -3.6 -1.2 -3.2Z" fill="#f6dc8a" stroke="#a87a18" stroke-width="0.8"/><circle r="1.3" fill="#fff" stroke="#a87a18" stroke-width="0.7"/></g></g></svg>
<div class="t" style="left:541.00px;top:220px;letter-spacing:0.426px;">Texas Instruments</div>
<div class="t" style="left:674.75px;top:220px;letter-spacing:0.233px;">XDS110 USB Debug</div>
<div class="t" style="left:822.25px;top:220px;letter-spacing:0.351px;">Probe_0/Cortex_R4_0</div>
<div class="t" style="left:984.00px;top:220px;letter-spacing:0.414px;">(Suspended)</div>
<svg class="a" style="left:540px;top:178px" width="12" height="10"><rect x="0" y="0" width="12" height="2.5" fill="#2a5a9c"/><rect x="0" y="0" width="12" height="1" fill="#5c92d4"/><rect x="0" y="3.7" width="12" height="2.5" fill="#2a5a9c"/><rect x="0" y="3.7" width="12" height="1" fill="#5c92d4"/><rect x="0" y="7.4" width="12" height="2.5" fill="#2a5a9c"/><rect x="0" y="7.4" width="12" height="1" fill="#5c92d4"/></svg>
<div class="t" style="left:559.20px;top:174px;letter-spacing:0.289px;">main() at dss_main.c:2,887</div>
<div class="t" style="left:752.00px;top:174px;letter-spacing:0.150px;">0x20003FE0</div>
<svg class="a" style="left:540px;top:201px" width="12" height="10"><rect x="0" y="0" width="12" height="2.5" fill="#2a5a9c"/><rect x="0" y="0" width="12" height="1" fill="#5c92d4"/><rect x="0" y="3.7" width="12" height="2.5" fill="#2a5a9c"/><rect x="0" y="3.7" width="12" height="1" fill="#5c92d4"/><rect x="0" y="7.4" width="12" height="2.5" fill="#2a5a9c"/><rect x="0" y="7.4" width="12" height="1" fill="#5c92d4"/></svg>
<div class="t" style="left:559.20px;top:197px;letter-spacing:0.255px;">_c_int00() at boot.c:180 0x007FEE5C</div>
<div class="t" style="left:828.50px;top:197px;letter-spacing:0.622px;">(the entry point was reached)</div>
<svg class="a" style="left:540px;top:247px" width="12" height="10"><rect x="0" y="0" width="12" height="2.5" fill="#2a5a9c"/><rect x="0" y="0" width="12" height="1" fill="#5c92d4"/><rect x="0" y="3.7" width="12" height="2.5" fill="#2a5a9c"/><rect x="0" y="3.7" width="12" height="1" fill="#5c92d4"/><rect x="0" y="7.4" width="12" height="2.5" fill="#2a5a9c"/><rect x="0" y="7.4" width="12" height="1" fill="#5c92d4"/></svg>
<div class="t" style="left:559.20px;top:243px;letter-spacing:0.441px;">xdc_runtime_Error_policyDefault__E(struct</div>
<div class="t" style="left:868.00px;top:243px;letter-spacing:0.409px;">xdc_runtime_Error_Block *,</div>
<div class="t" style="left:1066.50px;top:243px;letter-spacing:0.564px;">unsigned short,</div>
<div class="t" style="left:1183.50px;top:243px;letter-spacing:0.554px;">unsigned char *,</div>
<div class="t" style="left:1305.50px;top:243px;letter-spacing:0.429px;">int, unsigned int,</div>
<div class="t" style="left:1429.75px;top:243px;letter-spacing:0.375px;">int, int)() at</div>
<div class="t" style="left:1513.00px;top:243px;letter-spacing:0.486px;">Error.c:33 0x00005848</div>
<svg class="a" style="left:540px;top:270px" width="12" height="10"><rect x="0" y="0" width="12" height="2.5" fill="#2a5a9c"/><rect x="0" y="0" width="12" height="1" fill="#5c92d4"/><rect x="0" y="3.7" width="12" height="2.5" fill="#2a5a9c"/><rect x="0" y="3.7" width="12" height="1" fill="#5c92d4"/><rect x="0" y="7.4" width="12" height="2.5" fill="#2a5a9c"/><rect x="0" y="7.4" width="12" height="1" fill="#5c92d4"/></svg>
<div class="t" style="left:559.20px;top:266px;letter-spacing:0.548px;">0x00000000</div>
<div class="t" style="left:656.40px;top:266px;letter-spacing:0.600px;">(no symbols are defined)</div>
<div class="panel" style="left:476px;top:324px;width:1409px;height:676px;border-radius:4px 4px 0 0;border:1px solid #c2c9e2;border-top-color:#ccd3ea"><div class="a" style="left:0;top:0;right:0;height:28px;background:linear-gradient(#eaeefb,#dde2f3);border-bottom:1px solid #b9c2dd;border-radius:3px 3px 0 0"></div><div class="a" style="left:247px;top:0;width:97px;height:29px;background:#fff;border-radius:4px 4px 0 0;border:1px solid #c3cbe4;border-bottom:0"></div></div>
<svg class="a" style="left:481px;top:333px" width="16" height="15"><g transform="translate(0.5,0.5)"><rect x="0.5" y="0.5" width="14" height="13" fill="#eef6fd" stroke="#a8862a"/><rect x="0" y="0" width="15" height="1" fill="#3f78c8"/><rect x="1" y="1" width="13" height="1.6" fill="#a8c8f0"/><text x="4.2" y="11.6" font-family="Liberation Serif,serif" font-size="12" font-weight="700" fill="#1f5a96" stroke="#1f5a96" stroke-width="0.45">c</text></g></svg>
<div class="t" style="left:500.40px;top:331px;letter-spacing:0.466px;">0x7ea820</div>
<svg class="a" style="left:602px;top:333px" width="13" height="15"><g transform="translate(0.5,0)"><path d="M0.5 0.5H7.6L11.5 4.2V14.2H0.5Z" fill="#fdfdfb" stroke="#a8862a" stroke-width="1"/><path d="M7.6 0.5V4.2H11.5Z" fill="#e6c464" stroke="#a8862a" stroke-width="0.6"/><text x="1.3" y="11.6" font-family="Liberation Serif,serif" font-size="11.5" font-weight="700" fill="#1f5a96" stroke="#1f5a96" stroke-width="0.45">.c</text></g></svg>
<div class="t" style="left:619.60px;top:331px;letter-spacing:0.192px;">dss_main.c</div>
<svg class="a" style="left:727px;top:332px" width="15" height="16"><path d="M0.5 5V1.5H5L6.3 3H11.5V5" fill="#f6d67a" stroke="#b8902a" stroke-width="0.9"/><g transform="translate(3,1.2)"><path d="M0.5 0.5H7.6L11.5 4.2V14.2H0.5Z" fill="#fdfdfb" stroke="#a8862a" stroke-width="1"/><path d="M7.6 0.5V4.2H11.5Z" fill="#e6c464" stroke="#a8862a" stroke-width="0.6"/><text x="1.3" y="11.6" font-family="Liberation Serif,serif" font-size="11.5" font-weight="700" fill="#1f5a96" stroke="#1f5a96" stroke-width="0.45">.c</text></g></svg>
<div class="t" style="left:747.70px;top:331px;letter-spacing:0.325px;">Error.c</div>
<svg class="a" style="left:802px;top:335px" width="11" height="12"><g transform="translate(0,0.5)"><path d="M0.6 0.6H3.2L5.3 3.2 7.4 0.6H10L6.6 5 10 9.4H7.4L5.3 6.8 3.2 9.4H0.6L4 5Z" fill="#fff" stroke="#707070" stroke-width="0.9" stroke-linejoin="round"/></g></svg>
<svg class="a" style="left:1839px;top:333px" width="10" height="4"><rect x="0.5" y="0.5" width="9" height="3" fill="#fff" stroke="#686868"/></svg>
<svg class="a" style="left:1862px;top:332px" width="10" height="11"><rect x="0.5" y="0.5" width="9" height="9" fill="#fff" stroke="#686868"/><rect x="0.5" y="0.5" width="9" height="1.5" fill="#686868"/></svg>
<div class="a" style="left:478px;top:354px;width:12px;height:624px;background:#fbfbfb"></div>
<div class="a" style="left:478px;top:435px;width:12px;height:120px;background:#0078d7;background-image:repeating-conic-gradient(#ffffff 0% 25%, #0078d7 0% 50%);background-size:2px 2px;border-top:2px solid #0078d7"></div>
<svg class="a" style="left:478px;top:479px" width="9" height="11"><g transform="translate(0,0.5)"><path d="M-0.5 2.5H2.6V-0.4L8 5 2.6 10.4V7.5H-0.5Z" fill="#fff" stroke="#fff" stroke-width="1.6" stroke-linejoin="round"/><path d="M0 2.5H2.6V0.2L7.4 5 2.6 9.8V7.5H0Z" fill="#1f5fa0"/><rect x="0" y="3.4" width="3.4" height="3.2" fill="#7aaad8"/></g></svg>
<div class="a" style="left:520px;top:475px;width:1328px;height:20px;background:#e8f2fe"></div>
<div class="a" style="left:520px;top:475px;width:477px;height:20px;background:#c6dbae"></div>
<div class="a code" style="left:499px;top:357px"><div class="ln"><span class="no">27</span></div><div class="ln"><span class="no">28</span><span class="c">/*</span></div><div class="ln"><span class="no">29</span><span class="c"> *  ======== Error_init ========</span></div><div class="ln"><span class="no">30</span><span class="c"> */</span></div><div class="ln"><span class="no">31</span>Void <span class="b">Error_init</span>(Error_Block *eb)</div><div class="ln"><span class="no">32</span>{</div><div class="ln"><span class="no">33</span>    <span class="k">if</span> (eb &amp;&amp; eb != &amp;xdc_runtime_Error_IgnoreBlock) {</div><div class="ln"><span class="no">34</span>        <span class="k">memset</span>(eb, 0, <span class="k">sizeof</span> (Error_Block));</div><div class="ln"><span class="no">35</span>    }</div><div class="ln"><span class="no">36</span>}</div><div class="ln"><span class="no">37</span></div><div class="ln"><span class="no">38</span><span class="c">/*</span></div><div class="ln"><span class="no">39</span><span class="c"> *  ======== Error_check ========</span></div><div class="ln"><span class="no">40</span><span class="c"> */</span></div><div class="ln"><span class="no">41</span>Bool <span class="b">Error_check</span>(Error_Block *eb)</div><div class="ln"><span class="no">42</span>{</div><div class="ln"><span class="no">43</span>    <span class="c">/* The condition eb-&gt;id != 0 rejects Error_IGNORE */</span></div><div class="ln"><span class="no">44</span>    <span class="k">return</span> (Error_policy == Error_UNWIND &amp;&amp; eb != NULL &amp;&amp; eb-&gt;id != 0);</div><div class="ln"><span class="no">45</span>}</div><div class="ln"><span class="no">46</span></div><div class="ln"><span class="no">47</span><span class="c">/*</span></div><div class="ln"><span class="no">48</span><span class="c"> *  ======== Error_getData ========</span></div><div class="ln"><span class="no">49</span><span class="c"> */</span></div><div class="ln"><span class="no">50</span>Error_Data *<span class="b">Error_getData</span>(Error_Block *eb)</div><div class="ln"><span class="no">51</span>{</div><div class="ln"><span class="no">52</span>    <span class="k">return</span> (&amp;eb-&gt;data);</div><div class="ln"><span class="no">53</span>}</div><div class="ln"><span class="no">54</span></div><div class="ln"><span class="no">55</span><span class="c">/*</span></div><div class="ln"><span class="no">56</span><span class="c"> *  ======== Error_getCode ========</span></div><div class="ln"><span class="no">57</span><span class="c"> */</span></div></div>
<div class="a" style="left:1850px;top:354px;width:20px;height:624px;background:#f0f0f0"></div>
<div class="a" style="left:1850px;top:445px;width:19px;height:83px;background:#cdcdcd"></div>
<svg class="a" style="left:1855px;top:361px" width="10" height="7"><path d="M1 6L5 1.8 9 6" fill="none" stroke="#505050" stroke-width="1.7"/></svg>
<svg class="a" style="left:1855px;top:963px" width="10" height="7"><path d="M1 1L5 5.2 9 1" fill="none" stroke="#505050" stroke-width="1.7"/></svg>
<div class="a" style="left:1870px;top:354px;width:14px;height:645px;background:#f8f8f8"></div>
<div class="a" style="left:1872px;top:461px;width:9px;height:5px;border:1px solid #c6dbae"></div>
<div class="a" style="left:1872px;top:859px;width:9px;height:5px;border:1px solid #e0e0e0"></div>
<div class="a" style="left:518px;top:978px;width:1352px;height:21px;background:#f0f0f0"></div>
<svg class="a" style="left:524px;top:983px" width="7" height="10"><path d="M6 1L1.8 5 6 9" fill="none" stroke="#a0a0a0" stroke-width="1.5"/></svg>
<svg class="a" style="left:1835px;top:983px" width="7" height="10"><path d="M1 1L5.2 5 1 9" fill="none" stroke="#a0a0a0" stroke-width="1.5"/></svg>
<div class="a" style="left:1887px;top:95px;width:33px;height:102.5px;background:#efecdd;border:1px solid #dad6c2;border-radius:5px 5px 6px 6px"></div>
<div class="a" style="left:1891.5px;top:99.5px;width:23.5px;height:93.5px;background:#e8e8e8"></div>
<svg class="a" style="left:1895px;top:101px" width="17" height="3"><g transform="translate(0,0.2)"><path d="M0 1H17" stroke="#a4a4a4" stroke-width="1.4" stroke-dasharray="2.2 2.6"/></g></svg>
<svg class="a" style="left:1898px;top:112px" width="10" height="8"><g transform="translate(0.5,0)"><rect x="2.8" y="0.5" width="5.6" height="4" fill="#e8e8e8" stroke="#505050"/><rect x="2.8" y="0.5" width="5.6" height="1.3" fill="#505050"/><rect x="0.5" y="3.3" width="5.6" height="4" fill="#fff" stroke="#505050"/><rect x="0.5" y="3.3" width="5.6" height="1.3" fill="#505050"/></g></svg>
<div class="t" style="left:1894.80px;top:127px;font-size:10.5px;color:#3f4f80;letter-spacing:-0.507px;">(x)=</div>
<svg class="a" style="left:1895px;top:152px" width="17" height="15"><g transform="translate(0,0.5)"><circle cx="3.2" cy="6.6" r="2.3" fill="#cfe6f8" stroke="#3a5a8a"/><circle cx="9.6" cy="6.6" r="2.3" fill="#cfe6f8" stroke="#3a5a8a"/><path d="M1.2 5.2Q2 1 4.8 0.8M11.6 5.4Q12.6 1.2 15.8 1.4M5.5 6.4H7.3" fill="none" stroke="#3a5a8a" stroke-width="0.9"/><path d="M6.6 10.6L8.6 12.6M8.6 10.6L6.6 12.6M10.4 10.9H13.4M10.4 12.5H13.4" stroke="#3a5a8a" stroke-width="0.8"/></g></svg>
<div class="t" style="left:1896.20px;top:168px;font-size:7.6px;color:#3a5a8a;letter-spacing:-0.545px;">1010</div>
<div class="t" style="left:1896.20px;top:175px;font-size:7.6px;color:#3a5a8a;letter-spacing:-0.545px;">0101</div>
<div class="a" style="left:1064px;top:1002px;width:1px;height:24px;background:#a6a6a6"></div>
<div class="t" style="left:1072.60px;top:1005px;letter-spacing:0.847px;">Writable</div>
<div class="a" style="left:1183px;top:1002px;width:1px;height:24px;background:#a6a6a6"></div>
<div class="t" style="left:1191.20px;top:1005px;letter-spacing:0.497px;">Smart Insert</div>
<div class="a" style="left:1295px;top:1002px;width:1px;height:24px;background:#a6a6a6"></div>
<div class="t" style="left:1303.40px;top:1005px;letter-spacing:0.235px;">33 : 42</div>
<svg class="a" style="left:1405px;top:1009px" width="3" height="20"><g transform="translate(0.6,0)"><rect y="0.0" width="1.5" height="2.2" fill="#a29c8c"/><rect y="4.4" width="1.5" height="2.2" fill="#a29c8c"/><rect y="8.8" width="1.5" height="2.2" fill="#a29c8c"/><rect y="13.2" width="1.5" height="2.2" fill="#a29c8c"/></g></svg>
<svg class="a" style="left:1732px;top:1006px" width="3" height="21"><g transform="translate(0.2,0.4)"><rect y="0.0" width="1.5" height="2.2" fill="#a29c8c"/><rect y="5.3" width="1.5" height="2.2" fill="#a29c8c"/><rect y="10.6" width="1.5" height="2.2" fill="#a29c8c"/><rect y="15.9" width="1.5" height="2.2" fill="#a29c8c"/></g></svg>
<div class="t" style="left:1739.20px;top:1007px;letter-spacing:0.662px;">ARM</div>
<div class="a" style="left:1783px;top:1002px;width:1px;height:28px;background:#a6a6a6"></div>
<div class="t" style="left:1793.80px;top:1007px;letter-spacing:-2.173px;">LE</div>
<div class="a" style="left:1817px;top:1002px;width:1px;height:28px;background:#a6a6a6"></div>
<div class="t" style="left:1827.60px;top:1007px;letter-spacing:-1.686px;">SYS</div>
<svg class="a" style="left:1865px;top:1006px" width="3" height="21"><g transform="translate(0.4,0.4)"><rect y="0.0" width="1.5" height="2.2" fill="#a29c8c"/><rect y="5.3" width="1.5" height="2.2" fill="#a29c8c"/><rect y="10.6" width="1.5" height="2.2" fill="#a29c8c"/><rect y="15.9" width="1.5" height="2.2" fill="#a29c8c"/></g></svg>
</body></html>
